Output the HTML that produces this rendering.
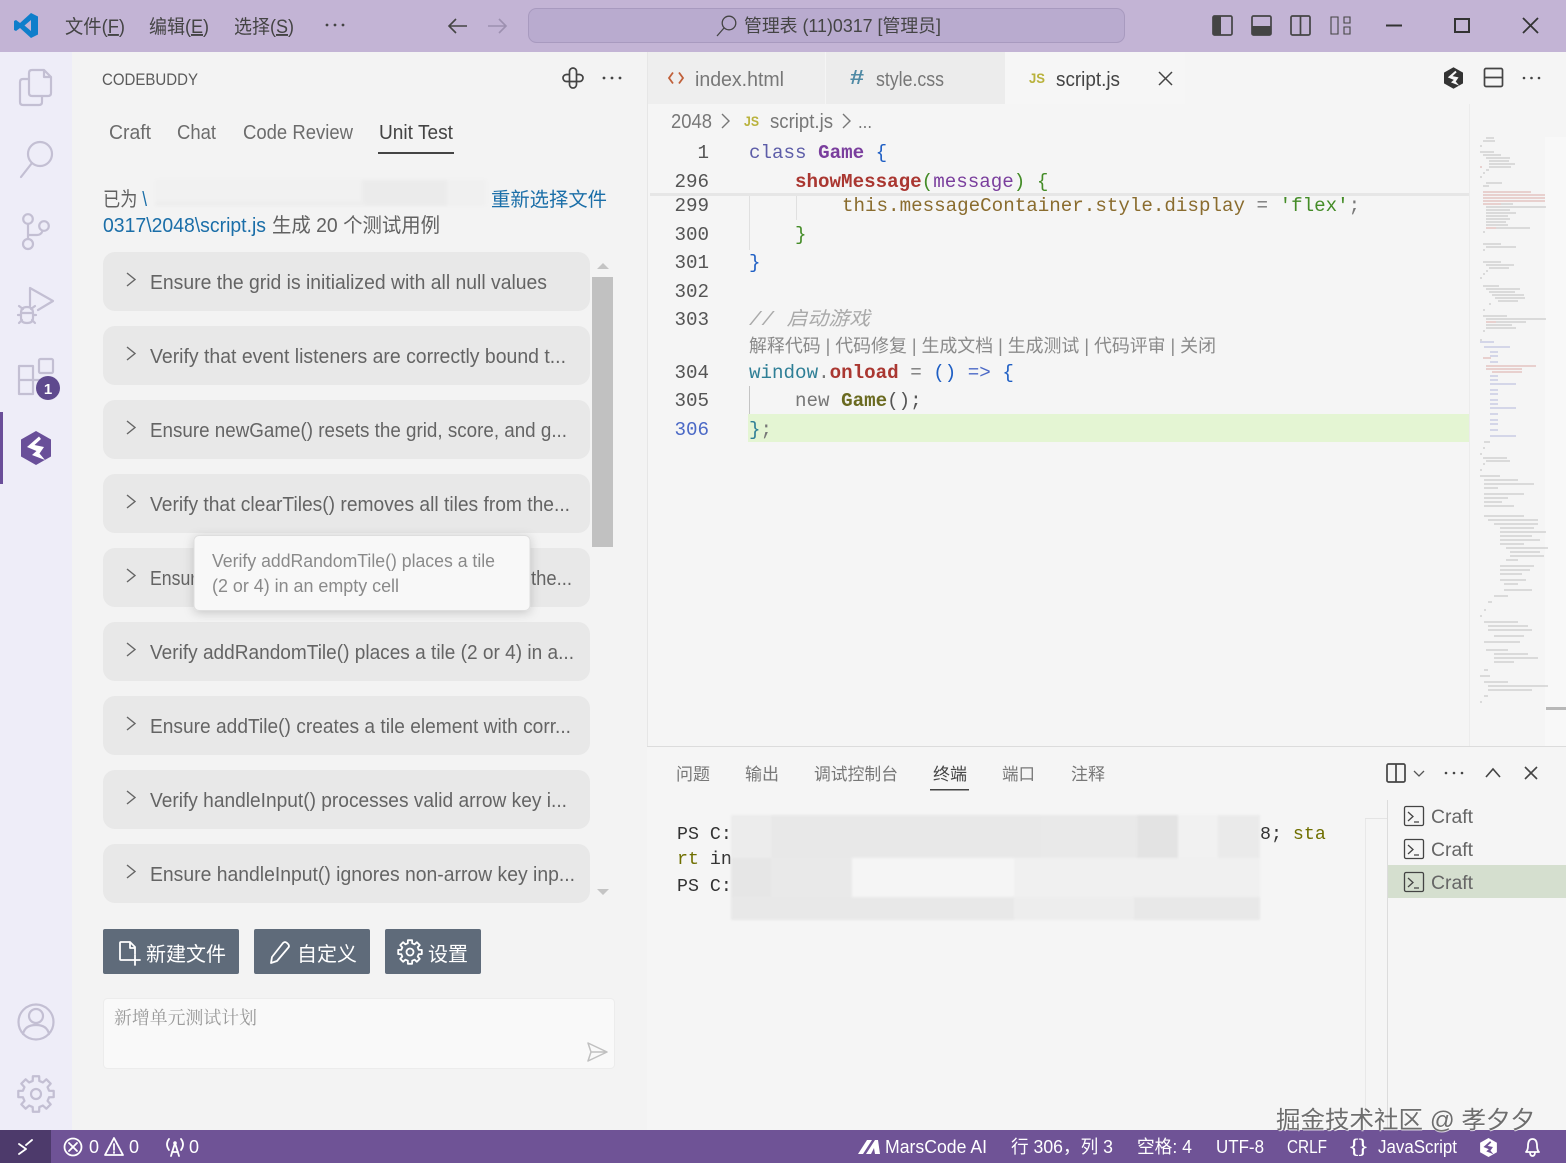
<!DOCTYPE html>
<html lang="zh">
<head>
<meta charset="utf-8">
<title>CodeBuddy</title>
<style>
html,body{margin:0;padding:0;width:1566px;height:1163px;overflow:hidden;background:#f4f4f4}
svg{display:block;position:absolute;left:0;top:0}
text{font-family:"Liberation Sans","Noto Sans CJK SC",sans-serif;white-space:pre}
.m{font-family:"Liberation Mono","Noto Sans CJK SC",monospace;font-size:19.2px}
.ln{font-family:"Liberation Mono",monospace;font-size:19.2px;fill:#555;text-anchor:end}
.card{fill:#e8e8e8}
.ct{font-size:20px;fill:#646464}
.ch{fill:none;stroke:#666;stroke-width:1.4}
.ai{fill:none;stroke:#c3bfd3;stroke-width:2.2;stroke-linecap:round;stroke-linejoin:round}
.w{fill:none;stroke:#fff;stroke-width:1.8;stroke-linecap:round;stroke-linejoin:round}
.st{font-size:18px;fill:#fff}
.d{fill:none;stroke:#444;stroke-width:1.7}
.pt{font-size:17px;fill:#777}
</style>
</head>
<body>
<svg width="1566" height="1163" viewBox="0 0 1566 1163" xmlns="http://www.w3.org/2000/svg">
<defs>
<filter id="sh" x="-10%" y="-20%" width="120%" height="150%"><feDropShadow dx="0" dy="2" stdDeviation="5" flood-color="#000" flood-opacity=".18"/></filter>
<filter id="bl" x="-5%" y="-5%" width="110%" height="110%"><feGaussianBlur stdDeviation="1.5"/></filter>
<filter id="bl2" x="-2%" y="-5%" width="104%" height="110%"><feGaussianBlur stdDeviation="1"/></filter>
<filter id="bl3" x="-5%" y="-2%" width="110%" height="104%"><feGaussianBlur stdDeviation=".35"/></filter>
<symbol id="hex" viewBox="0 0 30 34"><path d="M15 0 30 8.500V25.500L15 34 0 25.500V8.500Z"/><path fill="var(--z,#fff)" d="M18 5.500 6 16 15.500 20 11 24 24 29 18.500 22.500 23 16 13.500 14 20 8Z"/></symbol>
<path id="gear" d="M-2.100-11.800 2.100-11.800 2.200-8.700 4.600-7.700 6.900-9.800 9.800-6.900 7.700-4.600 8.700-2.200 11.800-2.100 11.800 2.100 8.700 2.200 7.700 4.600 9.800 6.900 6.900 9.800 4.600 7.700 2.200 8.700 2.100 11.800-2.100 11.800-2.200 8.700-4.600 7.700-6.900 9.800-9.800 6.900-7.700 4.600-8.700 2.200-11.800 2.100-11.800-2.100-8.700-2.200-7.700-4.600-9.800-6.900-6.900-9.800-4.600-7.700-2.200-8.700Z"/>
</defs>

<!-- backgrounds -->
<rect x="0" y="0" width="1566" height="52" fill="#c3b4d5"/>
<rect x="0" y="52" width="72" height="1078" fill="#eeedf8"/>
<rect x="72" y="52" width="575" height="1078" fill="#f3f3f3"/>
<rect x="647" y="52" width="919" height="1078" fill="#f5f5f5"/>
<rect x="647" y="52" width="1" height="1078" fill="#e6e6e6"/>

<!-- title bar -->
<path d="M31 13 38 16.500V34.500L31 38 20 28 16 31 14 30V21L16 20 20 23ZM31 20 24.500 25.500 31 31Z" fill="#0f7ecb"/>
<text x="65" y="33" font-size="19" fill="#444" textLength="60" lengthAdjust="spacingAndGlyphs">文件(<tspan text-decoration="underline">F</tspan>)</text>
<text x="149" y="33" font-size="19" fill="#444" textLength="60" lengthAdjust="spacingAndGlyphs">编辑(<tspan text-decoration="underline">E</tspan>)</text>
<text x="234" y="33" font-size="19" fill="#444" textLength="60" lengthAdjust="spacingAndGlyphs">选择(<tspan text-decoration="underline">S</tspan>)</text>
<g fill="#444"><circle cx="327" cy="25" r="1.400"/><circle cx="335" cy="25" r="1.400"/><circle cx="343" cy="25" r="1.400"/></g>
<path d="M467 26H449M456 19 449 26 456 33" fill="none" stroke="#444" stroke-width="1.600"/>
<path d="M488 26H506M499 19 506 26 499 33" fill="none" stroke="#9d90b0" stroke-width="1.600"/>
<rect x="528.500" y="8.500" width="596" height="34" rx="8" fill="#b9abcf" stroke="#a89abf"/>
<circle cx="729" cy="23" r="6.800" fill="none" stroke="#444" stroke-width="1.300"/>
<path d="M724 28 717 36" fill="none" stroke="#444" stroke-width="1.300"/>
<text x="744" y="32" font-size="18" fill="#444" textLength="197" lengthAdjust="spacingAndGlyphs">管理表 (11)0317 [管理员]</text>
<rect x="1213" y="16" width="19" height="19" rx="1.500" class="d"/><rect x="1213" y="16" width="8" height="19" fill="#444"/>
<rect x="1252" y="16" width="19" height="19" rx="1.500" class="d"/><rect x="1252" y="26" width="19" height="9" fill="#444"/>
<rect x="1291" y="16" width="19" height="19" rx="1.500" class="d" stroke-width="1.200"/><path d="M1300.500 16V35" class="d" stroke-width="1.200"/>
<path d="M1331 17h7v17h-7zM1344 17h6v6h-6zM1344 27h6v7h-6z" fill="none" stroke="#444" stroke-width="1.100"/>
<path d="M1386 25.500H1402" stroke="#333" stroke-width="2"/>
<rect x="1455" y="19" width="14" height="13" fill="none" stroke="#333" stroke-width="2"/>
<path d="M1523 18 1538 33M1538 18 1523 33" stroke="#333" stroke-width="1.800"/>

<!-- activity bar -->
<path class="ai" d="M32 70H44L51 77V93Q51 96 48 96H32Q29 96 29 93V73Q29 70 32 70ZM44 70V77H51"/>
<path class="ai" d="M29 79H23Q20 79 20 82V102Q20 105 23 105H39Q42 105 42 102V96"/>
<circle class="ai" cx="40" cy="154" r="12"/><path class="ai" d="M32 163 21 177"/>
<circle class="ai" cx="28" cy="219" r="4.800"/><circle class="ai" cx="44" cy="226" r="4.800"/><circle class="ai" cx="28" cy="244" r="5"/><path class="ai" d="M28 224V239M28 235H37Q41 235 42.500 231"/>
<path class="ai" d="M30 288V306M30 288 53 301 38 310"/>
<path class="ai" d="M21 313Q21 307 27 307T33 313V318Q33 323 27 323T21 318ZM19 306 23 309M35 306 31 309M18 315H21M33 315H36M19 323 22 320M35 323 32 320M21 313H33"/>
<path class="ai" d="M19 366H33V394H19ZM19 380H47M33 380V394"/>
<rect class="ai" x="39" y="359" width="14" height="14" rx="1.500"/>
<circle cx="48" cy="388" r="12" fill="#5f4a8e"/>
<text x="48" y="394" font-size="15" font-weight="bold" fill="#fff" text-anchor="middle">1</text>
<rect x="0" y="412" width="3" height="72" fill="#6a4e99"/>
<use href="#hex" x="21" y="431" width="30" height="34" fill="#694f99"/>
<circle class="ai" cx="36" cy="1022" r="17.500"/><circle class="ai" cx="36" cy="1016" r="7"/><path class="ai" d="M23 1034Q25 1025 36 1025T49 1034"/>
<circle class="ai" cx="36" cy="1094" r="5"/>
<use href="#gear" transform="translate(36 1094) scale(1.500)" fill="none" stroke="#c3bfd3" stroke-width="1.500" stroke-linejoin="round"/>

<!-- sidebar header -->
<text x="102" y="85" font-size="17" fill="#5a5a5a" textLength="96" lengthAdjust="spacingAndGlyphs">CODEBUDDY</text>
<path d="M569.500 74.500V71.500A3.500 3.500 0 0 1 576.500 71.500V74.500H579.500A3.500 3.500 0 0 1 579.500 81.500H576.500V84.500A3.500 3.500 0 0 1 569.500 84.500V81.500H566.500A3.500 3.500 0 0 1 566.500 74.500ZM569.500 74.500V81.500H576.500V74.500" fill="none" stroke="#444" stroke-width="1.700"/>
<g fill="#444"><circle cx="604" cy="78" r="1.400"/><circle cx="612" cy="78" r="1.400"/><circle cx="620" cy="78" r="1.400"/></g>
<text x="109" y="139" font-size="20" fill="#6c6c6c" textLength="42" lengthAdjust="spacingAndGlyphs">Craft</text>
<text x="177" y="139" font-size="20" fill="#6c6c6c" textLength="39" lengthAdjust="spacingAndGlyphs">Chat</text>
<text x="243" y="139" font-size="20" fill="#6c6c6c" textLength="110" lengthAdjust="spacingAndGlyphs">Code Review</text>
<text x="379" y="139" font-size="20" fill="#444" textLength="74" lengthAdjust="spacingAndGlyphs">Unit Test</text>
<rect x="378" y="152" width="76" height="2" fill="#444"/>

<text x="103" y="206" font-size="20" fill="#616161" textLength="44" lengthAdjust="spacingAndGlyphs">已为 <tspan fill="#1a6ea8">\</tspan></text>
<text x="491" y="206" font-size="19.500" fill="#1a6ea8" textLength="116" lengthAdjust="spacingAndGlyphs">重新选择文件</text>
<text x="103" y="232" font-size="20" fill="#1a6ea8" textLength="163" lengthAdjust="spacingAndGlyphs">0317\2048\script.js</text>
<text x="272" y="232" font-size="20" fill="#616161" textLength="168" lengthAdjust="spacingAndGlyphs">生成 20 个测试用例</text>
<g filter="url(#bl)">
<rect x="155" y="179" width="332" height="27" fill="#f1f1f1"/>
<rect x="362" y="180" width="85" height="26" fill="#ebebeb"/>
<rect x="447" y="180" width="36" height="26" fill="#f0f0f0"/>
<rect x="155" y="202" width="210" height="4" fill="#ededed"/>
</g>

<!-- cards -->
<rect class="card" x="103" y="252" width="487" height="59" rx="12"/>
<rect class="card" x="103" y="326" width="487" height="59" rx="12"/>
<rect class="card" x="103" y="400" width="487" height="59" rx="12"/>
<rect class="card" x="103" y="474" width="487" height="59" rx="12"/>
<rect class="card" x="103" y="548" width="487" height="59" rx="12"/>
<rect class="card" x="103" y="622" width="487" height="59" rx="12"/>
<rect class="card" x="103" y="696" width="487" height="59" rx="12"/>
<rect class="card" x="103" y="770" width="487" height="59" rx="12"/>
<rect class="card" x="103" y="844" width="487" height="59" rx="12"/>
<path class="ch" d="M127 273l8 6.500-8 6.500M127 347l8 6.500-8 6.500M127 421l8 6.500-8 6.500M127 495l8 6.500-8 6.500M127 569l8 6.500-8 6.500M127 643l8 6.500-8 6.500M127 717l8 6.500-8 6.500M127 791l8 6.500-8 6.500M127 865l8 6.500-8 6.500"/>
<text class="ct" x="150" y="289" textLength="397" lengthAdjust="spacingAndGlyphs">Ensure the grid is initialized with all null values</text>
<text class="ct" x="150" y="363" textLength="416" lengthAdjust="spacingAndGlyphs">Verify that event listeners are correctly bound t...</text>
<text class="ct" x="150" y="437" textLength="417" lengthAdjust="spacingAndGlyphs">Ensure newGame() resets the grid, score, and g...</text>
<text class="ct" x="150" y="511" textLength="420" lengthAdjust="spacingAndGlyphs">Verify that clearTiles() removes all tiles from the...</text>
<text class="ct" x="150" y="585" textLength="56" lengthAdjust="spacingAndGlyphs">Ensure</text>
<text class="ct" x="531" y="585" textLength="41" lengthAdjust="spacingAndGlyphs">the...</text>
<text class="ct" x="150" y="659" textLength="424" lengthAdjust="spacingAndGlyphs">Verify addRandomTile() places a tile (2 or 4) in a...</text>
<text class="ct" x="150" y="733" textLength="421" lengthAdjust="spacingAndGlyphs">Ensure addTile() creates a tile element with corr...</text>
<text class="ct" x="150" y="807" textLength="417" lengthAdjust="spacingAndGlyphs">Verify handleInput() processes valid arrow key i...</text>
<text class="ct" x="150" y="881" textLength="425" lengthAdjust="spacingAndGlyphs">Ensure handleInput() ignores non-arrow key inp...</text>

<!-- scrollbar -->
<rect x="592" y="277" width="21" height="270" fill="#c1c1c1"/>
<path d="M597 269h12l-6-6zM597 889h12l-6 6z" fill="#c4c4c4"/>

<!-- tooltip -->
<rect x="194" y="535.500" width="336" height="75" rx="5" fill="#f8f8f8" stroke="#dedede" filter="url(#sh)"/>
<text x="212" y="567" font-size="18" fill="#8a8a8a" textLength="283" lengthAdjust="spacingAndGlyphs">Verify addRandomTile() places a tile</text>
<text x="212" y="592" font-size="18" fill="#8a8a8a" textLength="187" lengthAdjust="spacingAndGlyphs">(2 or 4) in an empty cell</text>

<!-- buttons -->
<rect x="103" y="929" width="136" height="45" rx="2" fill="#5f6b7a"/>
<rect x="254" y="929" width="116" height="45" rx="2" fill="#5f6b7a"/>
<rect x="385" y="929" width="96" height="45" rx="2" fill="#5f6b7a"/>
<path class="w" d="M131 960H121Q120 960 120 959V943Q120 942 121 942H130L135 947V954M130 942V948H135M135 955V965M130 960H140"/>
<text x="146" y="961" font-size="20" fill="#fff" textLength="80" lengthAdjust="spacingAndGlyphs">新建文件</text>
<path class="w" d="M271 963 272 957 283 943Q285 941 287 943L288 944Q290 946 288 948L277 961Z"/>
<text x="297" y="961" font-size="20" fill="#fff" textLength="60" lengthAdjust="spacingAndGlyphs">自定义</text>
<circle class="w" cx="410" cy="952" r="3.500"/>
<use href="#gear" x="410" y="952" fill="none" stroke="#fff" stroke-width="1.800" stroke-linejoin="round"/>
<text x="428" y="961" font-size="20" fill="#fff" textLength="40" lengthAdjust="spacingAndGlyphs">设置</text>

<!-- input -->
<rect x="103.500" y="998.500" width="511" height="70" rx="4" fill="#f9f9f9" stroke="#ececec"/>
<text x="114" y="1024" font-size="18" fill="#9a9a9a" style="font-family:'Noto Serif CJK SC',serif" textLength="143" lengthAdjust="spacingAndGlyphs">新增单元测试计划</text>
<path d="M588 1043 607 1052 588 1061 591 1052ZM591 1052H607" fill="none" stroke="#c0c0c0" stroke-width="1.500" stroke-linejoin="round"/>

<!-- tabs -->
<rect x="648" y="52" width="177" height="52" fill="#eeeeee"/>
<rect x="826" y="52" width="179" height="52" fill="#ececec"/>
<rect x="1005" y="52" width="180" height="52" fill="#f6f6f6"/>
<path d="M673 72.500 669 78 673 83.500M679 72.500 683 78 679 83.500" fill="none" stroke="#c0603a" stroke-width="1.800"/>
<text x="695" y="86" font-size="20" fill="#777" textLength="89" lengthAdjust="spacingAndGlyphs">index.html</text>
<text x="850" y="84" font-size="20" font-weight="bold" fill="#4f8aa5" textLength="14" lengthAdjust="spacingAndGlyphs">#</text>
<text x="876" y="86" font-size="20" fill="#777" textLength="68" lengthAdjust="spacingAndGlyphs">style.css</text>
<text x="1029" y="83" font-size="14" font-weight="bold" fill="#b9b23c" textLength="16" lengthAdjust="spacingAndGlyphs">JS</text>
<text x="1056" y="86" font-size="20" fill="#444" textLength="64" lengthAdjust="spacingAndGlyphs">script.js</text>
<path d="M1159 72 1172 85M1172 72 1159 85" stroke="#444" stroke-width="1.500"/>
<use href="#hex" x="1444" y="67" width="19" height="22" fill="#333" style="--z:#f5f5f5"/>
<rect x="1484.500" y="68.500" width="18" height="18" rx="1.500" class="d"/><path d="M1484 77.500H1503" class="d"/>
<g fill="#444"><circle cx="1524" cy="78" r="1.300"/><circle cx="1531.500" cy="78" r="1.300"/><circle cx="1539" cy="78" r="1.300"/></g>

<!-- breadcrumbs -->
<text x="671" y="128" font-size="20" fill="#777" textLength="41" lengthAdjust="spacingAndGlyphs">2048</text>
<path d="M722 114 729 121 722 128M843 114 850 121 843 128" fill="none" stroke="#777" stroke-width="1.400"/>
<text x="744" y="126" font-size="14" font-weight="bold" fill="#b9b23c" textLength="15" lengthAdjust="spacingAndGlyphs">JS</text>
<text x="770" y="128" font-size="20" fill="#777" textLength="63" lengthAdjust="spacingAndGlyphs">script.js</text>
<text x="858" y="128" font-size="18" fill="#777" textLength="14" lengthAdjust="spacingAndGlyphs">...</text>

<!-- editor -->
<rect x="748" y="414" width="721" height="28" fill="#e4f5d3"/>
<rect x="650" y="193" width="819" height="3" fill="#e6e6e6"/>
<rect x="749" y="196" width="1" height="54" fill="#e0e0e0"/>
<rect x="796" y="196" width="1" height="24" fill="#e0e0e0"/>
<rect x="749" y="386" width="1" height="28" fill="#c4c4c4"/>

<text class="ln" x="709" y="158">1</text>
<text class="ln" x="709" y="187">296</text>
<text class="ln" x="709" y="211">299</text>
<text class="ln" x="709" y="240">300</text>
<text class="ln" x="709" y="268">301</text>
<text class="ln" x="709" y="297">302</text>
<text class="ln" x="709" y="325">303</text>
<text class="ln" x="709" y="378">304</text>
<text class="ln" x="709" y="406">305</text>
<text class="ln" x="709" y="435" style="fill:#4b69c6">306</text>

<text class="m" x="749" y="158" fill="#5d5da8">class <tspan fill="#7a3e9d" font-weight="bold">Game</tspan> <tspan fill="#1f5fc4">{</tspan></text>
<text class="m" x="795" y="187"><tspan fill="#aa3731" font-weight="bold">showMessage</tspan><tspan fill="#448c27">(</tspan><tspan fill="#7a3e9d">message</tspan><tspan fill="#448c27">) {</tspan></text>
<text class="m" x="842" y="211" fill="#8a6c2e">this.messageContainer.style.display <tspan fill="#777">=</tspan> <tspan fill="#448c27">'flex'</tspan><tspan fill="#777">;</tspan></text>
<text class="m" x="795" y="240" fill="#448c27">}</text>
<text class="m" x="749" y="268" fill="#1f5fc4">}</text>
<text class="m" x="749" y="325" fill="#aaaaaa" font-style="italic" textLength="121" lengthAdjust="spacingAndGlyphs">// 启动游戏</text>
<text x="749" y="352" font-size="18" fill="#8a8a8a" textLength="467" lengthAdjust="spacingAndGlyphs">解释代码 | 代码修复 | 生成文档 | 生成测试 | 代码评审 | 关闭</text>
<text class="m" x="749" y="378"><tspan fill="#2f7f96">window</tspan><tspan fill="#777">.</tspan><tspan fill="#aa3731" font-weight="bold">onload</tspan> <tspan fill="#777">=</tspan> <tspan fill="#1f5fc4">()</tspan> <tspan fill="#4b69c6">=&gt;</tspan> <tspan fill="#1f5fc4">{</tspan></text>
<text class="m" x="795" y="406"><tspan fill="#777">new</tspan> <tspan fill="#6a6a20" font-weight="bold">Game</tspan><tspan fill="#555">();</tspan></text>
<text class="m" x="749" y="435"><tspan fill="#2f7f96">}</tspan><tspan fill="#777">;</tspan></text>

<!-- minimap -->
<rect x="1469" y="104" width="1" height="642" fill="#ececec"/>
<rect x="1545" y="137" width="21" height="609" fill="#f8f8f8"/>
<rect x="1546" y="707" width="20" height="3" fill="#b8b8b8"/>
<g fill="none" stroke-width=".9" opacity=".42" filter="url(#bl3)">
<path stroke="#777" d="M1486 138h8M1483 141h12M1480 146h2M1480 152h14M1483 155h18M1486 158h24M1489 161h20M1489 164h26M1489 167h22M1486 170h3M1483 173h2M1480 177h2M1486 183h16M1483 186h6M1483 204h30M1486 207h60M1486 210h24M1486 213h30M1486 216h22M1486 219h24M1486 222h20M1486 225h22M1486 228h44M1483 232h2M1483 244h18M1486 247h30M1483 250h2M1483 262h18M1486 265h28M1489 268h20M1486 271h2M1483 274h2M1480 278h2M1483 286h16M1486 289h34M1489 292h26M1492 295h32M1495 298h30M1498 301h20M1489 304h2M1483 310h2M1483 316h24M1486 319h60M1486 322h40M1486 325h26M1486 328h30M1483 331h2M1480 340h2"/>
<path stroke="#b5473f" d="M1480 167h2M1483 192h48M1483 195h62M1483 198h62M1483 201h62M1483 204h18M1486 228h10M1486 322h10M1483 358h8M1486 366h50M1486 369h36M1492 372h30"/>
<path stroke="#5a62b8" d="M1480 342h14M1484 347h26M1490 352h8M1490 356h8M1490 362h8M1490 376h8M1490 380h8M1490 384h26M1490 390h8M1490 394h8M1490 400h8M1490 404h8M1490 408h26M1490 414h8M1490 420h8M1490 424h8M1490 430h8M1490 436h26"/>
<path stroke="#777" d="M1484 442h6M1483 448h2M1480 454h2M1483 458h24M1486 461h24M1483 464h2M1480 470h2M1480 476h20M1484 480h34M1484 484h50M1484 488h14M1484 494h40M1484 498h24M1484 502h18M1484 506h30M1484 516h40M1488 520h50M1494 524h44M1500 528h34M1500 532h46M1500 536h32M1500 540h40M1500 544h24M1506 548h42M1510 552h30M1510 556h34M1506 560h12M1500 566h34M1500 570h30M1500 574h22M1500 580h26M1504 584h14M1504 590h28M1494 596h14M1488 602h4M1484 610h2M1480 616h2M1484 622h34M1488 626h40M1488 630h44M1494 636h30M1484 642h36M1486 650h22M1494 654h34M1494 658h44M1494 662h20M1484 670h4M1480 676h10M1484 682h24M1488 686h60M1488 690h44M1484 696h4M1480 702h2"/>
</g>

<!-- panel -->
<rect x="647" y="746" width="919" height="1.500" fill="#dcdcdc"/>
<rect x="647" y="747" width="919" height="383" fill="#f5f5f5"/>
<text class="pt" x="676" y="780" textLength="34" lengthAdjust="spacingAndGlyphs">问题</text>
<text class="pt" x="745" y="780" textLength="34" lengthAdjust="spacingAndGlyphs">输出</text>
<text class="pt" x="814" y="780" textLength="84" lengthAdjust="spacingAndGlyphs">调试控制台</text>
<text class="pt" x="933" y="780" style="fill:#444" textLength="34" lengthAdjust="spacingAndGlyphs">终端</text>
<text class="pt" x="1002" y="780" textLength="33" lengthAdjust="spacingAndGlyphs">端口</text>
<text class="pt" x="1071" y="780" textLength="34" lengthAdjust="spacingAndGlyphs">注释</text>
<rect x="930" y="789" width="39" height="1.500" fill="#444"/>
<rect x="1387" y="764" width="18" height="18" rx="1.500" class="d"/><path d="M1396 764V782" class="d"/>
<path d="M1414 771 1419 776 1424 771" fill="none" stroke="#555" stroke-width="1.300"/>
<g fill="#444"><circle cx="1446" cy="773" r="1.300"/><circle cx="1454" cy="773" r="1.300"/><circle cx="1462" cy="773" r="1.300"/></g>
<path d="M1486 777 1493 769 1500 777" fill="none" stroke="#444" stroke-width="1.600"/>
<path d="M1525 767 1537 779M1537 767 1525 779" stroke="#444" stroke-width="1.600"/>

<!-- terminal -->
<text class="m" x="677" y="839" style="font-size:18.300px" fill="#333">PS C:</text>
<text class="m" x="1260" y="839" style="font-size:18.300px" fill="#333">8; <tspan fill="#6f6f00">sta</tspan></text>
<text class="m" x="677" y="864" style="font-size:18.300px" fill="#333"><tspan fill="#6f6f00">rt</tspan> in</text>
<text class="m" x="677" y="891" style="font-size:18.300px" fill="#333">PS C:</text>
<g filter="url(#bl2)">
<rect x="731" y="815" width="529" height="105" fill="#ececec"/>
<rect x="771" y="815" width="270" height="105" fill="#e8e8e8"/>
<rect x="1041" y="815" width="137" height="43" fill="#e9e9e9"/>
<rect x="1137" y="815" width="41" height="43" fill="#e3e3e3"/>
<rect x="1178" y="815" width="40" height="43" fill="#f1f1f1"/>
<rect x="1218" y="815" width="42" height="43" fill="#eaeaea"/>
<rect x="731" y="858" width="529" height="39" fill="#eeeeee"/>
<rect x="731" y="858" width="40" height="39" fill="#e6e6e6"/>
<rect x="771" y="858" width="81" height="39" fill="#e9e9e9"/>
<rect x="852" y="858" width="162" height="39" fill="#f5f5f5"/>
<rect x="1014" y="858" width="246" height="39" fill="#f0f0f0"/>
<rect x="731" y="897" width="529" height="23" fill="#e8e8e8"/>
<rect x="1014" y="897" width="120" height="23" fill="#ededed"/>
</g>

<!-- terminal list -->
<rect x="1387" y="800" width="1" height="330" fill="#dcdcdc"/>
<rect x="1365" y="818" width="1" height="312" fill="#e8e8e8"/>
<rect x="1365" y="818" width="22" height="1" fill="#e4e4e4"/>
<rect x="1388" y="865" width="178" height="33" fill="#d5dfcf"/>
<g fill="none" stroke="#444" stroke-width="1.300">
<rect x="1404.500" y="806.500" width="19" height="19" rx="1.500"/><path d="M1408 812 1413 816.500 1408 821M1414 822H1419"/>
<rect x="1404.500" y="839.500" width="19" height="19" rx="1.500"/><path d="M1408 845 1413 849.500 1408 854M1414 855H1419"/>
<rect x="1404.500" y="872.500" width="19" height="19" rx="1.500"/><path d="M1408 878 1413 882.500 1408 887M1414 888H1419"/>
</g>
<text x="1431" y="823" font-size="19" fill="#666" textLength="42" lengthAdjust="spacingAndGlyphs">Craft</text>
<text x="1431" y="856" font-size="19" fill="#666" textLength="42" lengthAdjust="spacingAndGlyphs">Craft</text>
<text x="1431" y="889" font-size="19" fill="#666" textLength="42" lengthAdjust="spacingAndGlyphs">Craft</text>

<!-- status bar -->
<rect x="0" y="1130" width="1566" height="33" fill="#6f5396"/>
<rect x="0" y="1130" width="51" height="33" fill="#4d3a6b"/>
<path class="w" d="M19 1144 26 1149 19 1154M32 1140 26 1145" stroke-width="1.500"/>
<circle class="w" cx="73" cy="1147" r="8.500" stroke-width="1.500"/><path class="w" d="M69 1143 77 1151M77 1143 69 1151" stroke-width="1.500"/>
<text class="st" x="89" y="1153">0</text>
<path class="w" d="M114 1138 123 1155H105ZM114 1144V1150M114 1152V1153" stroke-width="1.500"/>
<text class="st" x="129" y="1153">0</text>
<path class="w" d="M175 1143 171 1156M175 1143 179 1156M172 1152H178M169 1139Q165 1144 169 1150M181 1139Q185 1144 181 1150" stroke-width="1.400"/>
<circle cx="175" cy="1143" r="1.800" fill="#fff"/>
<text class="st" x="189" y="1153">0</text>
<path d="M858 1154 867 1140H872L863 1154ZM866 1154 875 1140H878L880 1154H875L874 1148 871 1154Z" fill="#fff"/>
<text class="st" x="885" y="1153" textLength="102" lengthAdjust="spacingAndGlyphs">MarsCode AI</text>
<text class="st" x="1011" y="1153" textLength="102" lengthAdjust="spacingAndGlyphs">行 306，列 3</text>
<text class="st" x="1137" y="1153" textLength="55" lengthAdjust="spacingAndGlyphs">空格: 4</text>
<text class="st" x="1216" y="1153" textLength="48" lengthAdjust="spacingAndGlyphs">UTF-8</text>
<text class="st" x="1287" y="1153" textLength="40" lengthAdjust="spacingAndGlyphs">CRLF</text>
<text class="st" x="1350" y="1152" textLength="17" lengthAdjust="spacingAndGlyphs">{}</text>
<text class="st" x="1378" y="1153" textLength="79" lengthAdjust="spacingAndGlyphs">JavaScript</text>
<use href="#hex" x="1480" y="1138" width="17" height="19" fill="#fff" style="--z:#6f5396"/>
<path class="w" d="M1526 1152Q1528 1150 1528 1146Q1528 1139 1532.500 1139T1537 1146Q1537 1150 1539 1152ZM1530 1152Q1530 1156 1532.500 1156T1535 1152" stroke-width="1.500"/>

<!-- watermark -->
<text x="1277" y="1129" font-size="24" fill="#fff" opacity=".75" textLength="258" lengthAdjust="spacingAndGlyphs">掘金技术社区 @ 孝夕夕</text>
<text x="1276" y="1128" font-size="24" fill="#6e6e6e" textLength="259" lengthAdjust="spacingAndGlyphs">掘金技术社区 @ 孝夕夕</text>
</svg>
</body>
</html>
